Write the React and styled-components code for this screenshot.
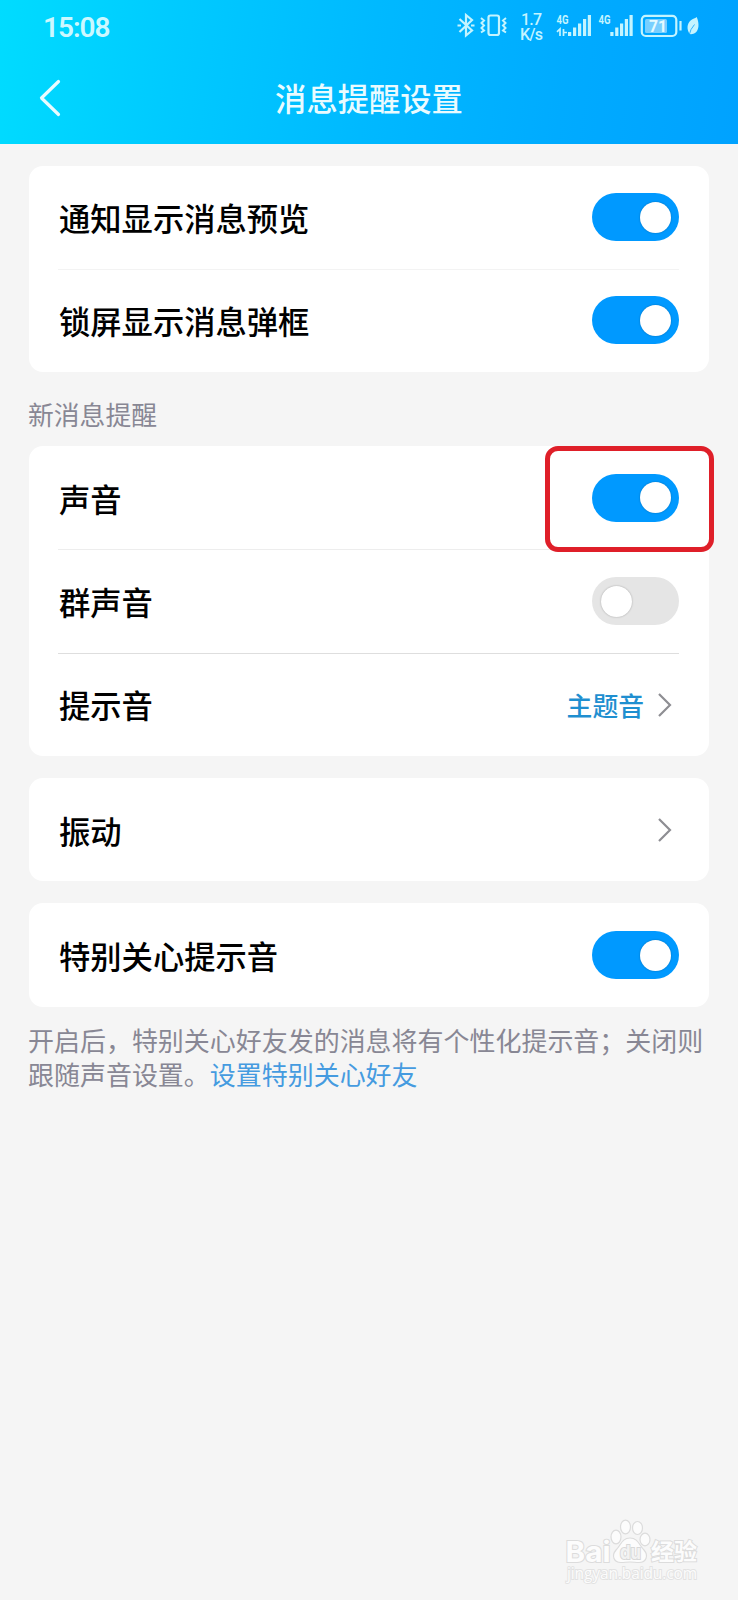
import React, { useState } from "react";
import styled, { createGlobalStyle } from "styled-components";

const GlobalStyle = createGlobalStyle`
  * {
    box-sizing: border-box;
  }
  body {
    margin: 0;
    background: #f5f5f5;
    font-family: "Noto Sans CJK SC", "Noto Sans", sans-serif;
  }
  button {
    border: 0;
    padding: 0;
    background: none;
    font: inherit;
  }
`;

const Screen = styled.div`
  position: relative;
  width: 738px;
  height: 1600px;
  overflow: hidden;
  background: #f5f5f5;
`;

const Header = styled.header`
  height: 143.5px;
  color: #e9fbff;
  background: linear-gradient(98deg, #00dcff 0%, #00caff 24%, #00b9ff 50%, #00abff 76%, #00a2ff 100%);
`;

const StatusBar = styled.div`
  display: flex;
  justify-content: space-between;
  height: 54px;
  padding-left: 43px;
`;

const Clock = styled.div`
  padding-top: 10px;
  font-family: Roboto, "Noto Sans", sans-serif;
  font-size: 28px;
  font-weight: 600;
  line-height: 36px;
  letter-spacing: -1px;
  color: #ccf8ff;
`;

const TitleBar = styled.div`
  display: grid;
  grid-template-columns: 90px 1fr 90px;
  align-items: center;
  height: 87px;
  h1 {
    margin: 0;
    text-align: center;
    font-size: 31.3px;
    font-weight: 500;
    line-height: 46px;
  }
`;

const BackButton = styled.button`
  display: flex;
  padding-left: 36px;
  color: inherit;
`;

const Content = styled.main`
  display: flex;
  flex-direction: column;
  padding: 22px 29px 0;
`;

const Card = styled.section`
  width: 680px;
  margin-bottom: ${(p) => p.$gap || 0}px;
  border-radius: 14px;
  background: #fff;
`;

const Row = styled.div`
  display: flex;
  align-items: center;
  justify-content: space-between;
  height: 103.33px;
  margin: 0 30px 0 29px;
  box-shadow: ${(p) => (p.$line ? `0 1px 0 ${p.$line}` : "none")};
`;

const RowLabel = styled.span`
  padding: 2px 0 0 1px;
  font-size: 31.3px;
  font-weight: 500;
  line-height: 46px;
  color: #000;
`;

const Track = styled.button`
  position: relative;
  width: 87px;
  height: 48px;
  border-radius: 24px;
  background: ${(p) => (p.$on ? "#0099ff" : "#e5e5e5")};
`;

const Knob = styled.span`
  position: absolute;
  top: 8.5px;
  left: ${(p) => (p.$on ? 48 : 9)}px;
  width: 31px;
  height: 31px;
  border-radius: 50%;
  background: #fff;
  box-shadow: 0 0 2px rgba(0, 0, 0, 0.3);
`;

const Marker = styled.div`
  position: absolute;
  top: 446px;
  left: 545px;
  width: 169px;
  height: 106px;
  border: 5px solid #df1f29;
  border-radius: 13px;
  pointer-events: none;
`;

const RowValue = styled.span`
  display: flex;
  align-items: center;
  gap: 13px;
  padding: 1px 7px 0 0;
  font-size: 25.8px;
  font-weight: 500;
  line-height: 38px;
  color: #1f8fd0;
`;

const SectionTitle = styled.h2`
  height: 74px;
  margin: 0 0 0 -1px;
  padding-top: 23px;
  font-size: 25.8px;
  font-weight: 400;
  line-height: 38px;
  color: #888794;
`;

const Note = styled.p`
  width: 690px;
  margin: 16px 0 0 -1px;
  font-size: 25.97px;
  line-height: 34.5px;
  color: #888794;
  a {
    color: #459be0;
  }
`;

const Watermark = styled.div`
  position: absolute;
  left: 560px;
  top: 1518px;
  text {
    paint-order: stroke;
  }
`;

function Toggle({ label, defaultOn }) {
  const [on, setOn] = useState(defaultOn);
  return (
    <Track $on={on} role="switch" aria-checked={on} aria-label={label} onClick={() => setOn(!on)}>
      <Knob $on={on} />
    </Track>
  );
}

function Chevron() {
  return (
    <svg width="15" height="26" viewBox="0 0 15 26" fill="none" stroke="#8e8e93" strokeWidth="2.2">
      <path d="M2 2 13 13 2 24" />
    </svg>
  );
}

function SwitchRow({ label, on, line }) {
  return (
    <Row $line={line}>
      <RowLabel>{label}</RowLabel>
      <Toggle label={label} defaultOn={on} />
    </Row>
  );
}

function LinkRow({ label, value }) {
  return (
    <Row>
      <RowLabel>{label}</RowLabel>
      <RowValue>
        {value}
        <Chevron />
      </RowValue>
    </Row>
  );
}

function StatusIcons() {
  return (
    <svg width="288" height="54" viewBox="450 0 288 54" fill="none" stroke="#c4f4ff" strokeWidth="2.2">
      {/* bluetooth */}
      <path d="M459.500 19 472 30.500 466 35.500V15L472 20 459.500 32" />
      <path d="M457.500 25.500h3.500M471 25.500h3.500" />
      {/* vibrate */}
      <rect x="488.500" y="15.500" width="10.500" height="19.500" rx="2" />
      <path d="M481 18l3 2.500-2.500 2.500 2.500 2.500-2.500 2.500 2.500 2.500-3 2M506 18l-3 2.500 2.500 2.500-2.500 2.500 2.500 2.500-2.500 2.500 3 2" strokeWidth="2" />
      <g fill="#c4f4ff" stroke="none" fontFamily="Roboto, sans-serif">
        <text x="521" y="24.500" fontSize="16" fontWeight="500" textLength="21">1.7</text>
        <text x="520" y="39.500" fontSize="16" fontWeight="500" textLength="23">K/s</text>
        <text x="556.500" y="24" fontSize="12.500" fontWeight="700" textLength="12" lengthAdjust="spacingAndGlyphs">4G</text>
        <text x="598.500" y="24" fontSize="12.500" fontWeight="700" textLength="12" lengthAdjust="spacingAndGlyphs">4G</text>
        {/* signal bars */}
        <path d="M568 32h3.200v4h-3.200zM573 27.500h3.200v8.500h-3.200zM578 23.500h3.200v12.500h-3.200zM583 19h3.200v17h-3.200zM587.800 15h3.200v21h-3.200z" />
        <path d="M610.300 32h3.200v4h-3.200zM615.200 27.500h3.200v8.500h-3.200zM620 23.500h3.200v12.500h-3.200zM624.800 19h3.200v17h-3.200zM629.500 15h3.200v21h-3.200z" />
        <rect x="645" y="19" width="22" height="14" rx="1.500" fill="#78cfff" />
        <text x="649" y="32" fontSize="17" fontWeight="700" textLength="18" lengthAdjust="spacingAndGlyphs" fill="#e4faff">71</text>
        {/* power saving leaf */}
        <path d="M689 33c-3-6-1-11 3-13.500 2-1 3.500-1.500 4.700-2.500 3 7 2 13-1 15.500-1.500 1.300-3.200 1.800-5.200 1.700z" />
      </g>
      <path d="M694.500 24.500 691 29.500 689.500 34" stroke="#30b4ff" strokeWidth="1" />
      <path d="M560 36v-7l-3 2.800M563.500 29v7M564 32.500l3 0" strokeWidth="1.700" />
      {/* battery */}
      <rect x="641.800" y="15.800" width="34.500" height="20.200" rx="4" />
      <path d="M680.500 21v9.500" />
    </svg>
  );
}

function BaiduMark() {
  return (
    <svg width="145" height="70" viewBox="560 1518 145 70" fill="#fcfcfc" stroke="#dcdcdc" strokeWidth="2">
      <g fontFamily="Inter, sans-serif" fontWeight="700">
        <text x="565.500" y="1561.500" fontSize="29" textLength="45" lengthAdjust="spacingAndGlyphs">Bai</text>
        <g strokeWidth="1.200">
          <ellipse cx="616" cy="1537" rx="5" ry="6.800" />
          <ellipse cx="625.500" cy="1527" rx="5" ry="6.800" />
          <ellipse cx="637.500" cy="1528" rx="5" ry="6.500" />
          <ellipse cx="645" cy="1539.500" rx="5" ry="6.300" />
          <path d="M630 1538c8 0 9 7 14 12 5 6 2 12.500-5 12.500-4 0-5-.5-9-.5s-5 .5-9 .5c-7 0-10-6.500-5-12.500 5-5 6-12 14-12z" />
        </g>
        <text x="620" y="1559" fontSize="19" textLength="21" lengthAdjust="spacingAndGlyphs" fill="#f2f2f2" stroke="#d8d8d8">du</text>
      </g>
      <text x="651" y="1559.500" fontSize="23" fontWeight="700" fontFamily="Noto Sans CJK SC, sans-serif" textLength="46">经验</text>
      <text x="567" y="1579" fontSize="15.500" strokeWidth="1.800" stroke="#e2e2e2" fontFamily="Open Sans, sans-serif" textLength="130">jingyan.baidu.com</text>
    </svg>
  );
}

export default function App() {
  return (
    <>
      <GlobalStyle />
      <Screen>
        <Header>
          <StatusBar>
            <Clock>15:08</Clock>
            <StatusIcons />
          </StatusBar>
          <TitleBar>
            <BackButton aria-label="返回">
              <svg width="25" height="38" viewBox="0 0 25 38" fill="none" stroke="currentColor" strokeWidth="3.2">
                <path d="M22.500 2.500 5.500 19 22.500 35.500" strokeLinecap="round" strokeLinejoin="round" />
              </svg>
            </BackButton>
            <h1>消息提醒设置</h1>
          </TitleBar>
        </Header>
        <Content>
          <Card>
            <SwitchRow label="通知显示消息预览" on line="#f3f3f3" />
            <SwitchRow label="锁屏显示消息弹框" on />
          </Card>
          <SectionTitle>新消息提醒</SectionTitle>
          <Card $gap={22}>
            <SwitchRow label="声音" on line="#ededed" />
            <SwitchRow label="群声音" on={false} line="#dedede" />
            <LinkRow label="提示音" value="主题音" />
          </Card>
          <Card $gap={22}>
            <LinkRow label="振动" />
          </Card>
          <Card>
            <SwitchRow label="特别关心提示音" on />
          </Card>
          <Note>
            开启后，特别关心好友发的消息将有个性化提示音；关闭则跟随声音设置。<a>设置特别关心好友</a>
          </Note>
        </Content>
        <Marker />
        <Watermark>
          <BaiduMark />
        </Watermark>
      </Screen>
    </>
  );
}
